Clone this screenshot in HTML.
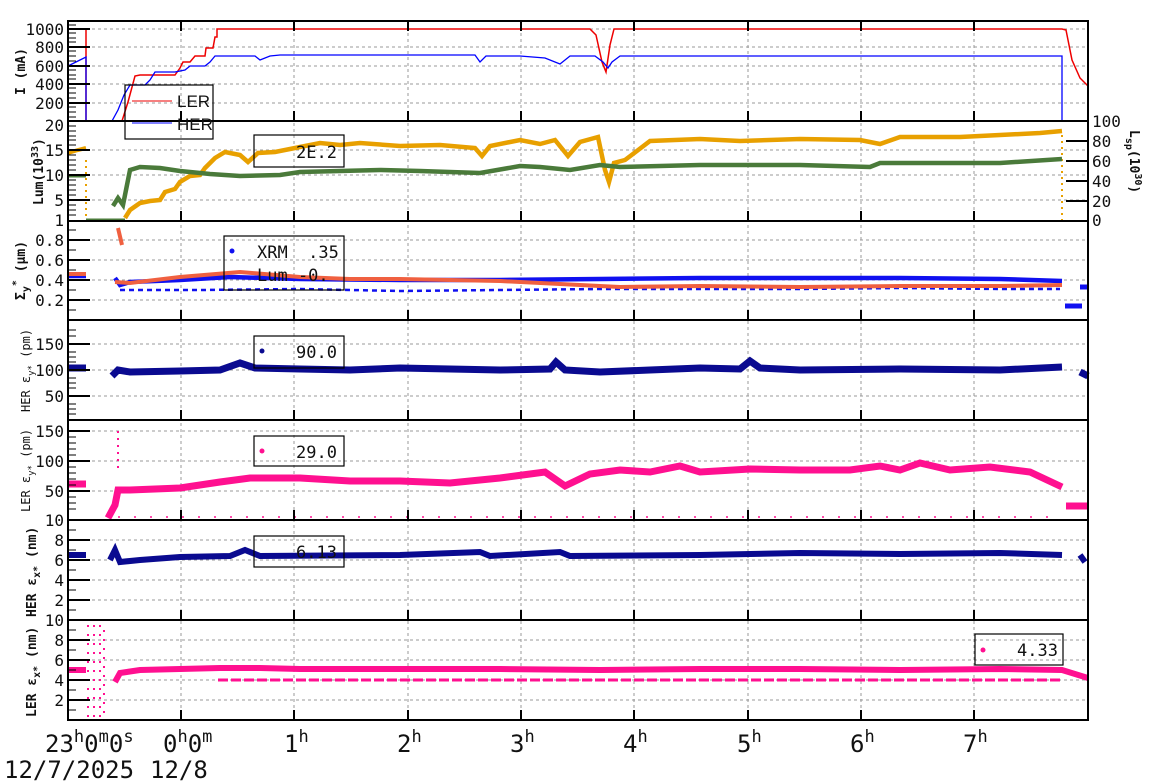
<!DOCTYPE html>
<html><head><meta charset="utf-8"><style>
html,body{margin:0;padding:0;background:#fff;width:1160px;height:782px;overflow:hidden}
svg{display:block}
text{font-family:"DejaVu Sans Mono","Liberation Mono",monospace;fill:#111}
</style></head><body>
<svg width="1160" height="782" viewBox="0 0 1160 782" xmlns="http://www.w3.org/2000/svg">
<g stroke="#999" stroke-dasharray="3,3" stroke-width="1">
<path d="M181 21V720M294 21V720M408 21V720M521 21V720M634 21V720M748 21V720M861 21V720M974 21V720"/>
<path d="M68 29H1088M68 47H1088M68 66H1088M68 84H1088M68 103H1088"/>
<path d="M68 150H1088M68 175H1088M68 200H1088"/>
<path d="M68 240H1088M68 260H1088M68 280H1088M68 300H1088"/>
<path d="M68 344H1088M68 370H1088M68 396H1088"/>
<path d="M68 431H1088M68 461H1088M68 491H1088"/>
<path d="M68 540H1088M68 560H1088M68 580H1088M68 600H1088"/>
<path d="M68 640H1088M68 660H1088M68 680H1088M68 700H1088"/>
</g>
<path d="M68 29H86V121H122L128 102L135 76L140 75H175L180 68L183 62H190L195 56H205L206 48H213L215 37H217V29H590L596 35L602 62L606 72L610 45L614 29H1062L1066 30L1072 60L1080 78L1088 86" fill="none" stroke="#e00" stroke-width="1.5"/>
<path d="M68 66L80 60L86 57V121H112L118 110L124 95L130 85H145L150 80L155 72H175L185 70L190 66H205L210 62L215 56H255L260 60L270 56L280 55H475L480 62L486 56H520L545 58L560 64L570 56H595L603 62L608 68L612 62L620 56H1062V121" fill="none" stroke="#00f" stroke-width="1.3"/>
<path d="M68 153L78 150L86 148" fill="none" stroke="#e8a000" stroke-width="4"/>
<path d="M86 160V220" stroke="#e8a000" stroke-width="2" stroke-dasharray="2,4"/>
<path d="M125 218L130 210L140 203L150 201L160 200L165 192L175 189L180 182L190 176L200 175L205 168L215 158L225 152L240 155L248 162L258 153L275 152L290 149L300 147L320 143L340 145L360 143L400 146L440 145L475 148L482 156L490 146L520 140L540 144L555 140L568 156L580 142L598 137L605 170L609 182L614 163L625 160L650 141L700 139L740 141L800 139L860 140L880 144L900 137L960 137L1000 135L1040 133L1062 131" fill="none" stroke="#e8a000" stroke-width="4.5"/>
<path d="M1062 135V220" stroke="#e8a000" stroke-width="2" stroke-dasharray="2,4"/>
<path d="M68 176H86M86 220H125" fill="none" stroke="#4a7a3a" stroke-width="3"/>
<path d="M113 206L118 198L123 205L126 190L130 170L140 167L160 168L180 171L210 174L240 176L280 175L300 172L340 171L380 170L420 171L480 173L520 166L540 167L570 170L600 165L620 167L700 165L800 165L870 167L880 163L1000 163L1062 159" fill="none" stroke="#4a7a3a" stroke-width="4.5"/>
<path d="M1062 221H1088" stroke="#4a7a3a" stroke-width="2"/>
<path d="M68 276H86M115 278L120 285L130 282L180 280L230 277L300 279L400 280L500 280L600 279L700 278L800 278L900 278L1000 279L1062 281" fill="none" stroke="#1010f0" stroke-width="4.5"/>
<path d="M120 290L200 290L300 289L400 291L500 290L600 289L700 289L800 289L900 288L1000 289L1060 289" fill="none" stroke="#1010f0" stroke-width="2.5" stroke-dasharray="5,4"/>
<path d="M1065 306H1082M1080 287H1088" stroke="#1010f0" stroke-width="5"/>
<path d="M68 274H86M118 228L122 245M115 282L130 283L180 277L240 272L300 277L350 279L400 279L500 281L580 285L620 287L700 286L800 287L900 286L1000 286L1062 285" fill="none" stroke="#f06040" stroke-width="4"/>
<path d="M68 368H86M112 376L118 370L130 372L180 371L220 370L240 363L255 368L300 369L350 370L400 368L450 369L500 370L550 369L556 362L565 370L600 372L650 370L700 368L740 369L750 361L760 368L800 370L900 369L1000 370L1062 367M1080 372L1088 376" fill="none" stroke="#0a0a90" stroke-width="7"/>
<path d="M68 484H86M108 518L115 505L118 490L130 490L180 488L220 482L250 478L300 478L350 481L400 481L450 483L500 478L530 474L545 472L565 486L590 474L620 470L650 472L680 466L700 472L750 469L800 470L850 470L880 466L900 470L920 463L950 470L990 467L1030 472L1062 487M1066 506H1088" fill="none" stroke="#ff1090" stroke-width="7"/>
<path d="M118 517H1062" stroke="#ff1090" stroke-width="1.5" stroke-dasharray="2,14"/>
<path d="M118 468V430" stroke="#ff1090" stroke-width="2" stroke-dasharray="2,5"/>
<path d="M68 555H86M110 560L115 550L120 562L140 560L180 557L230 556L245 550L260 556L400 555L480 552L490 556L560 552L570 556L700 555L800 553L900 554L1000 553L1062 555M1080 555L1085 562" fill="none" stroke="#0a0a90" stroke-width="6"/>
<path d="M68 670H86M115 682L120 673L140 670L180 669L220 668L260 668L300 669L400 669L500 669L600 670L700 669L800 669L900 670L1000 669L1062 670L1088 678" fill="none" stroke="#ff1090" stroke-width="6"/>
<path d="M218 680H1062" stroke="#ff1090" stroke-width="3" stroke-dasharray="10,3"/>
<path d="M88 625V718M94 625V718M100 625V718M104 630V718" stroke="#ff1090" stroke-width="2" stroke-dasharray="2,7"/>
<g fill="none" stroke="#000" stroke-width="2">
<rect x="68" y="21" width="1020" height="699"/>
<path d="M68 121H1088M68 221H1088M68 320H1088M68 420H1088M68 520H1088M68 620H1088"/>
</g>
<g stroke="#000" stroke-width="2">
<path d="M68 29h22M68 47h22M68 66h22M68 84h22M68 103h22M68 150h22M68 175h22M68 200h22M68 240h22M68 260h22M68 280h22M68 300h22M68 344h22M68 370h22M68 396h22M68 431h22M68 461h22M68 491h22M68 540h22M68 560h22M68 580h22M68 600h22M68 640h22M68 660h22M68 680h22M68 700h22"/>
<path d="M1066 141h22M1066 161h22M1066 181h22M1066 201h22"/>
<path d="M181 21v10M294 21v10M408 21v10M521 21v10M634 21v10M748 21v10M861 21v10M974 21v10"/>
<path d="M181 121v-10M294 121v-10M408 121v-10M521 121v-10M634 121v-10M748 121v-10M861 121v-10M974 121v-10"/>
<path d="M181 221v-10M294 221v-10M408 221v-10M521 221v-10M634 221v-10M748 221v-10M861 221v-10M974 221v-10"/>
<path d="M181 320v-10M294 320v-10M408 320v-10M521 320v-10M634 320v-10M748 320v-10M861 320v-10M974 320v-10"/>
<path d="M181 420v-10M294 420v-10M408 420v-10M521 420v-10M634 420v-10M748 420v-10M861 420v-10M974 420v-10"/>
<path d="M181 520v-10M294 520v-10M408 520v-10M521 520v-10M634 520v-10M748 520v-10M861 520v-10M974 520v-10"/>
<path d="M181 620v-10M294 620v-10M408 620v-10M521 620v-10M634 620v-10M748 620v-10M861 620v-10M974 620v-10"/>
<path d="M181 720v-10M294 720v-10M408 720v-10M521 720v-10M634 720v-10M748 720v-10M861 720v-10M974 720v-10"/>
</g>
<g stroke="#000" stroke-width="1"><path d="M68 25h8M68 33h8M68 38h8M68 42h8M68 51h8M68 56h8M68 61h8M68 70h8M68 75h8M68 79h8M68 88h8M68 93h8M68 98h8M68 107h8M68 112h8M68 117h8M68 126h8M68 131h8M68 136h8M68 140h8M68 145h8M68 155h8M68 160h8M68 165h8M68 170h8M68 180h8M68 185h8M68 190h8M68 195h8M68 205h8M68 210h8M68 215h8M68 230h8M68 250h8M68 270h8M68 290h8M68 310h8M68 330h8M68 336h8M68 352h8M68 357h8M68 362h8M68 378h8M68 383h8M68 388h8M68 404h8M68 409h8M68 414h8M68 437h8M68 443h8M68 449h8M68 455h8M68 467h8M68 473h8M68 479h8M68 485h8M68 497h8M68 503h8M68 509h8M68 530h8M68 550h8M68 570h8M68 590h8M68 610h8M68 630h8M68 650h8M68 670h8M68 690h8M68 710h8"/></g>
<g fill="none" stroke="#000" stroke-width="1.2">
<rect x="125" y="85" width="88" height="54"/>
<rect x="254" y="135" width="90" height="32"/>
<rect x="224" y="236" width="120" height="54"/>
<rect x="254" y="336" width="90" height="32"/>
<rect x="254" y="436" width="90" height="30"/>
<rect x="254" y="536" width="90" height="31"/>
<rect x="975" y="634" width="88" height="31"/>
</g>
<path d="M132 101H172" stroke="#e00"/><path d="M132 123H172" stroke="#00f"/>
<text x="177" y="107" font-size="17" style="font-family:'Liberation Sans',sans-serif">LER</text>
<text x="177" y="130" font-size="17" style="font-family:'Liberation Sans',sans-serif">HER</text>
<g font-size="17">
<text x="296" y="158">2E.2</text>
<text x="257" y="258" xml:space="preserve">XRM  .35</text>
<text x="257" y="281">Lum -0.</text>
<text x="296" y="358">90.0</text>
<text x="296" y="458">29.0</text>
<text x="296" y="558">6.13</text>
<text x="1017" y="656">4.33</text>
</g>
<circle cx="232" cy="251" r="2.5" fill="#1010f0"/><circle cx="262" cy="351" r="2.5" fill="#0a0a90"/>
<circle cx="262" cy="451" r="2.5" fill="#ff1090"/><circle cx="983" cy="650" r="2.5" fill="#ff1090"/>
<g font-size="16" text-anchor="end">
<text x="64" y="35">1000</text><text x="64" y="53">800</text><text x="64" y="72">600</text><text x="64" y="90">400</text><text x="64" y="109">200</text>
<text x="64" y="131">20</text><text x="64" y="156">15</text><text x="64" y="181">10</text><text x="64" y="206">5</text><text x="64" y="226">1</text>
<text x="64" y="246">0.8</text><text x="64" y="266">0.6</text><text x="64" y="286">0.4</text><text x="64" y="306">0.2</text>
<text x="64" y="350">150</text><text x="64" y="376">100</text><text x="64" y="402">50</text>
<text x="64" y="437">150</text><text x="64" y="467">100</text><text x="64" y="497">50</text><text x="64" y="526">10</text>
<text x="64" y="546">8</text><text x="64" y="566">6</text><text x="64" y="586">4</text><text x="64" y="606">2</text>
<text x="64" y="626">10</text><text x="64" y="646">8</text><text x="64" y="666">6</text><text x="64" y="686">4</text><text x="64" y="706">2</text>
</g>
<g font-size="16">
<text x="1092" y="127">100</text><text x="1092" y="147">80</text><text x="1092" y="167">60</text><text x="1092" y="187">40</text><text x="1092" y="207">20</text><text x="1092" y="226">0</text>
</g>
<g font-size="13" font-weight="bold">
<text transform="translate(25,95) rotate(-90)">I (mA)</text>
<text transform="translate(43,205) rotate(-90)">Lum(10<tspan dy="-5" font-size="10">33</tspan><tspan dy="5">)</tspan></text>
<text transform="translate(25,300) rotate(-90)">Σ<tspan dy="4" font-size="10">y</tspan><tspan dy="-10" font-size="10">*</tspan><tspan dy="6"> (μm)</tspan></text>
<text transform="translate(1130,130) rotate(90)">L<tspan dy="4" font-size="10">sp</tspan><tspan dy="-4">(10</tspan><tspan dy="-5" font-size="10">30</tspan><tspan dy="5">)</tspan></text>
<text transform="translate(36,717) rotate(-90)">LER ε<tspan dy="4" font-size="10">x*</tspan><tspan dy="-4"> (nm)</tspan></text>
<text transform="translate(36,617) rotate(-90)">HER ε<tspan dy="4" font-size="10">x*</tspan><tspan dy="-4"> (nm)</tspan></text>
</g>
<g font-size="12">
<text transform="translate(30,412) rotate(-90)">HER ε<tspan dy="4" font-size="9">y*</tspan><tspan dy="-4"> (pm)</tspan></text>
<text transform="translate(30,512) rotate(-90)">LER ε<tspan dy="4" font-size="9">y*</tspan><tspan dy="-4"> (pm)</tspan></text>
</g>
<g font-size="24">
<text x="45" y="752">23<tspan dy="-10" font-size="17">h</tspan><tspan dy="10">0</tspan><tspan dy="-10" font-size="17">m</tspan><tspan dy="10">0</tspan><tspan dy="-10" font-size="17">s</tspan></text>
<text x="163" y="752">0<tspan dy="-10" font-size="17">h</tspan><tspan dy="10">0</tspan><tspan dy="-10" font-size="17">m</tspan></text>
<text x="284" y="752">1<tspan dy="-10" font-size="17">h</tspan></text>
<text x="397" y="752">2<tspan dy="-10" font-size="17">h</tspan></text>
<text x="510" y="752">3<tspan dy="-10" font-size="17">h</tspan></text>
<text x="623" y="752">4<tspan dy="-10" font-size="17">h</tspan></text>
<text x="737" y="752">5<tspan dy="-10" font-size="17">h</tspan></text>
<text x="850" y="752">6<tspan dy="-10" font-size="17">h</tspan></text>
<text x="963" y="752">7<tspan dy="-10" font-size="17">h</tspan></text>
<text x="4" y="778">12/7/2025</text>
<text x="150" y="778">12/8</text>
</g>
</svg>
</body></html>
